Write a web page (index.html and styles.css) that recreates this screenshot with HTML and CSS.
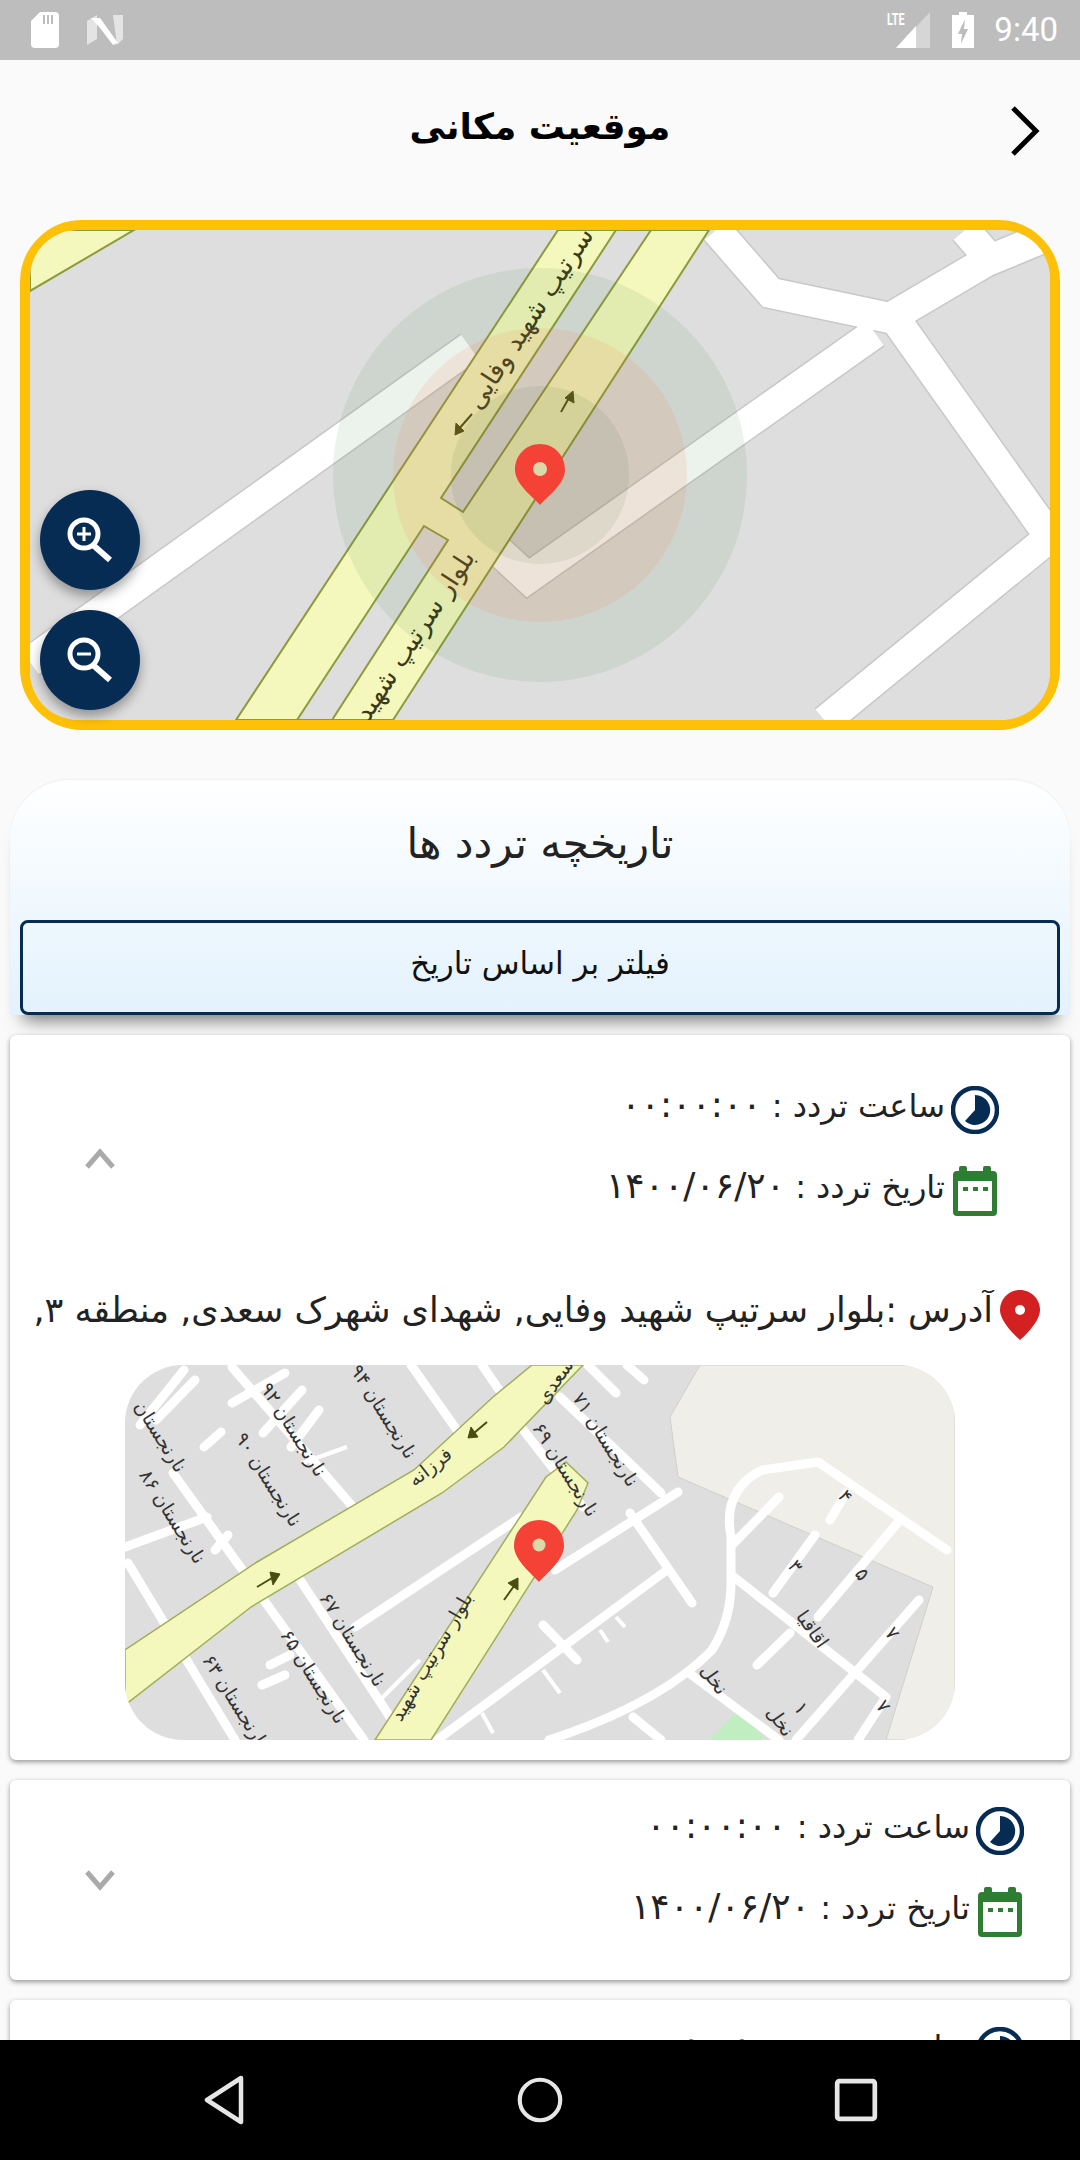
FILE: index.html
```html
<!DOCTYPE html>
<html lang="fa">
<head>
<meta charset="utf-8">
<title>موقعیت مکانی</title>
<link rel="stylesheet" href="styles.css">
</head>
<body>
<div class="screen">
  <header class="status">
    <div class="status-left">
      <svg class="ic-sd" viewBox="0 0 28 36"><path d="M9 0h15a4 4 0 0 1 4 4v28a4 4 0 0 1-4 4H4a4 4 0 0 1-4-4V9z" fill="#fff"/><path d="M12 3h2v9h-2zM16 3h2v9h-2zM20 3h2v9h-2z" fill="#bdbdbd"/></svg>
      <svg class="ic-n" viewBox="0 0 36 30"><path d="M0 6l10-6v24L0 30z" fill="#e4e4e4"/><path d="M26 0h10v24l-6 6z" fill="#e4e4e4"/><path d="M4 3h9l18 25-5 2-13-17v0z" fill="#fff"/></svg>
    </div>
    <div class="status-right">
      <div class="signal">
        <span class="lte">LTE</span>
        <svg class="ic-signal" viewBox="0 0 34 36"><path d="M34 0v36H0z" fill="#d6d6d6"/><path d="M20 14v22H0z" fill="#fff"/></svg>
      </div>
      <svg class="ic-batt" viewBox="0 0 22 36"><path d="M7 0h8v3h7v33H0V3h7z" fill="#fff"/><path d="M13 7l-7 15h4l-1 10 7-15h-4z" fill="#bdbdbd"/></svg>
      <span class="clock">9:40</span>
    </div>
  </header>

  <main class="content">
    <div class="appbar">
      <h1 class="title">موقعیت مکانی</h1>
      <svg class="ic-back" viewBox="0 0 30 50"><path d="M3 2l23 23L3 48" fill="none" stroke="#000" stroke-width="5"/></svg>
    </div>

    <section class="map-frame">
      <svg class="map-main" viewBox="30 230 1020 490">
        <rect x="30" y="230" width="1020" height="490" fill="#dedede"/>
        <g class="casing">
          <path d="M30 662L470 347"/><path d="M875 333L528 578L465 520"/><path d="M716 230L771 293L890 318L985 262L1050 235"/><path d="M965 230L995 265"/><path d="M891 313L1050 537L825 721"/>
        </g>
        <g class="street-wide">
          <path d="M30 662L470 347"/><path d="M875 333L528 578L465 520"/><path d="M716 230L771 293L890 318L985 262L1050 235"/><path d="M965 230L995 265"/><path d="M891 313L1050 537L825 721"/>
        </g>
        <path class="road" d="M30 230H134L30 291Z"/>
        <path class="road" d="M236 720L558 230H709L393 720Z"/>
        <path class="median" d="M616 230L441 498L463 512L651 230Z"/>
        <path class="median" d="M424 526L448 540L332 720H297Z"/>
        <g class="arrow">
          <path d="M472 414L458 430"/><path class="arrow-head" d="M455 435L456 423L464 431Z"/>
          <path d="M561 412L570 396"/><path class="arrow-head" d="M573 391L574 403L565 398Z"/>
        </g>
        <text class="road-label" transform="translate(537 323) rotate(-57)" text-anchor="middle">سرتیپ شهید وفایی</text>
        <text class="road-label" transform="translate(422 640) rotate(-57)" text-anchor="middle">بلوار سرتیپ شهید</text>
        <circle class="ring-outer" cx="540" cy="475" r="207"/>
        <circle class="ring-mid" cx="540" cy="475" r="147"/>
        <circle class="ring-inner" cx="540" cy="475" r="89"/>
        <path class="pin" d="M540 444C526 444 515 455 515 470C515 484 534 498 540 505C546 498 565 484 565 470C565 455 554 444 540 444Z"/>
        <circle class="pin-hole" cx="540" cy="469" r="7"/>
      </svg>
      <button class="zoom-btn zoom-in" type="button">
        <svg viewBox="0 0 100 100"><circle cx="44" cy="44" r="14" fill="none" stroke="#fff" stroke-width="5"/><path d="M53 55l17 15" stroke="#fff" stroke-width="6"/><path d="M37 44h14M44 37v14" stroke="#fff" stroke-width="3"/></svg>
      </button>
      <button class="zoom-btn zoom-out" type="button">
        <svg viewBox="0 0 100 100"><circle cx="44" cy="44" r="14" fill="none" stroke="#fff" stroke-width="5"/><path d="M53 55l17 15" stroke="#fff" stroke-width="6"/><path d="M37 44h14" stroke="#fff" stroke-width="3"/></svg>
      </button>
    </section>

    <section class="history-head">
      <h2 class="history-title">تاریخچه تردد ها</h2>
      <button class="filter" type="button">فیلتر بر اساس تاریخ</button>
    </section>

    <div class="list">
      <article class="card card-open">
        <div class="summary">
          <svg class="ic-chev" viewBox="0 0 32 24"><path d="M3 20L16 5l13 15" fill="none" stroke="#aaa" stroke-width="5"/></svg>
          <div class="rows">
            <div class="row"><span class="row-text">ساعت تردد : <span class="digits">۰۰:۰۰:۰۰</span></span>
              <svg class="ic-clock" viewBox="0 0 48 48"><circle cx="24" cy="24" r="22" fill="none" stroke="#062c54" stroke-width="4.5"/><path d="M24 9A15 15 0 1 1 14 35L24 24Z" fill="#062c54"/></svg></div>
            <div class="row"><span class="row-text">تاریخ تردد : <span class="digits">۱۴۰۰/۰۶/۲۰</span></span>
              <svg class="ic-cal" viewBox="0 0 44 50"><path d="M8 0h4a2 2 0 0 1 2 2v3h16V2a2 2 0 0 1 2-2h4a2 2 0 0 1 2 2v3h2a4 4 0 0 1 4 4v37a4 4 0 0 1-4 4H4a4 4 0 0 1-4-4V9a4 4 0 0 1 4-4h2V2a2 2 0 0 1 2-2z" fill="#2e7d32"/><rect x="5" y="15" width="34" height="30" fill="#fff"/><path d="M10 21h5v4h-5zM20 21h5v4h-5zM30 21h5v4h-5z" fill="#2e7d32"/></svg></div>
          </div>
        </div>
        <div class="address">
          <span class="address-text">آدرس :بلوار سرتیپ شهید وفایی, شهدای شهرک سعدی, منطقه ۳,</span>
          <svg class="ic-pin" viewBox="0 0 40 50"><path d="M20 0C9 0 0 9 0 20C0 33 20 50 20 50S40 33 40 20C40 9 31 0 20 0Z" fill="#d32020"/><circle cx="20" cy="20" r="5" fill="#fff"/></svg>
        </div>
        <svg class="map-mini" viewBox="125 1365 830 375">
          <rect x="125" y="1365" width="830" height="375" fill="#dedede"/>
          <path class="land" d="M700 1365L670 1417L678 1477L933 1587L886 1740H955V1365Z"/>
          <path class="park" d="M740 1708L709 1740H765Z"/>
          <g class="street">
            <path d="M411 1365L459 1433"/><path d="M482 1365L504 1397"/><path d="M588 1365L616 1393"/><path d="M627 1365L644 1380"/>
            <path d="M232 1367L353 1507"/><path d="M173 1473L364 1740"/><path d="M128 1563L235 1740"/><path d="M285 1557L392 1720"/>
            <path d="M560 1397L661 1493"/><path d="M521 1427L583 1507"/><path d="M156 1420L195 1380"/><path d="M184 1370L140 1425"/><path d="M232 1403L285 1373"/>
            <path d="M263 1433L302 1390"/><path d="M291 1447L319 1410"/><path d="M204 1447L221 1432"/><path d="M125 1547L207 1517"/>
            <path d="M355 1627L521 1517"/><path d="M555 1570L678 1492"/><path d="M630 1513L692 1603"/><path d="M437 1740L667 1570"/>
            <path d="M543 1625L577 1660"/><path d="M734 1577L886 1697L858 1740"/><path d="M689 1673L779 1740"/><path d="M734 1543L779 1497"/>
            <path d="M830 1520L846 1493"/><path d="M773 1593L815 1535"/><path d="M818 1617L900 1520"/><path d="M757 1665L790 1633"/>
            <path d="M796 1740L919 1600"/><path d="M633 1717L661 1740"/><path d="M549 1740Q661 1703 712 1650Q731 1620 731 1583V1537Q722 1490 762 1470L818 1462L947 1550"/>
            <path d="M270 1665L290 1655"/><path d="M262 1685L285 1675"/><path d="M215 1550L228 1535"/>
          </g>
          <g class="street-thin">
            <path d="M600 1630L608 1642"/><path d="M616 1617L625 1627"/><path d="M543 1670L560 1693"/><path d="M482 1713L493 1733"/><path d="M302 1463L347 1447"/><path d="M440 1640L470 1610"/><path d="M380 1700L420 1660"/><path d="M420 1690L455 1650"/>
          </g>
          <path class="road road-mini" d="M125 1650L257 1562L414 1470L493 1397L532 1365H583L504 1447L442 1493L251 1607L125 1705Z"/>
          <path class="road road-mini" d="M375 1740L546 1477L566 1462L588 1483L577 1510L431 1740Z"/>
          <g class="arrow">
            <path d="M257 1587L272 1578"/><path class="arrow-head" d="M280 1574L270 1572L273 1585Z"/>
            <path d="M487 1422L474 1433"/><path class="arrow-head" d="M468 1438L471 1427L478 1437Z"/>
            <path d="M504 1600L514 1586"/><path class="arrow-head" d="M518 1578L508 1583L518 1590Z"/>
          </g>
          <g class="map-label">
            <text transform="translate(378 1415) rotate(58)" text-anchor="middle">نارنجستان ۹۴</text>
            <text transform="translate(288 1433) rotate(58)" text-anchor="middle">نارنجستان ۹۲</text>
            <text transform="translate(263 1483) rotate(58)" text-anchor="middle">نارنجستان ۹۰</text>
            <text transform="translate(155 1440) rotate(58)" text-anchor="middle">نارنجستان</text>
            <text transform="translate(167 1520) rotate(58)" text-anchor="middle">نارنجستان ۸۶</text>
            <text transform="translate(347 1643) rotate(58)" text-anchor="middle">نارنجستان ۶۷</text>
            <text transform="translate(308 1680) rotate(58)" text-anchor="middle">نارنجستان ۶۵</text>
            <text transform="translate(230 1705) rotate(58)" text-anchor="middle">نارنجستان ۶۳</text>
            <text transform="translate(560 1473) rotate(58)" text-anchor="middle">نارنجستان ۶۹</text>
            <text transform="translate(600 1443) rotate(58)" text-anchor="middle">نارنجستان ۷۱</text>
            <text transform="translate(434 1472) rotate(-38)" text-anchor="middle">فرزانه</text>
            <text transform="translate(560 1385) rotate(-55)" text-anchor="middle">سعدی</text>
            <text transform="translate(437 1660) rotate(-60)" text-anchor="middle">بلوار سرتیپ شهید</text>
            <text transform="translate(807 1633) rotate(55)" text-anchor="middle">اقاقیا</text>
            <text transform="translate(709 1683) rotate(55)" text-anchor="middle">نخل</text>
            <text transform="translate(775 1725) rotate(55)" text-anchor="middle">نخل</text>
            <text transform="translate(840 1500) rotate(55)" text-anchor="middle">۴</text>
            <text transform="translate(790 1570) rotate(55)" text-anchor="middle">۳</text>
            <text transform="translate(857 1578) rotate(55)" text-anchor="middle">۵</text>
            <text transform="translate(887 1637) rotate(55)" text-anchor="middle">۷</text>
            <text transform="translate(878 1710) rotate(55)" text-anchor="middle">۷</text>
            <text transform="translate(796 1712) rotate(55)" text-anchor="middle">۱</text>
          </g>
          <path class="pin" d="M539 1520C525 1520 514 1531 514 1546C514 1560 533 1575 539 1582C545 1575 564 1560 564 1546C564 1531 553 1520 539 1520Z"/>
          <circle class="pin-hole" cx="539" cy="1545" r="6.5"/>
        </svg>
      </article>

      <article class="card card-closed">
        <div class="summary">
          <svg class="ic-chev" viewBox="0 0 32 24"><path d="M3 4l13 15L29 4" fill="none" stroke="#aaa" stroke-width="5"/></svg>
          <div class="rows">
            <div class="row"><span class="row-text">ساعت تردد : <span class="digits">۰۰:۰۰:۰۰</span></span>
              <svg class="ic-clock" viewBox="0 0 48 48"><circle cx="24" cy="24" r="22" fill="none" stroke="#062c54" stroke-width="4.5"/><path d="M24 9A15 15 0 1 1 14 35L24 24Z" fill="#062c54"/></svg></div>
            <div class="row"><span class="row-text">تاریخ تردد : <span class="digits">۱۴۰۰/۰۶/۲۰</span></span>
              <svg class="ic-cal" viewBox="0 0 44 50"><path d="M8 0h4a2 2 0 0 1 2 2v3h16V2a2 2 0 0 1 2-2h4a2 2 0 0 1 2 2v3h2a4 4 0 0 1 4 4v37a4 4 0 0 1-4 4H4a4 4 0 0 1-4-4V9a4 4 0 0 1 4-4h2V2a2 2 0 0 1 2-2z" fill="#2e7d32"/><rect x="5" y="15" width="34" height="30" fill="#fff"/><path d="M10 21h5v4h-5zM20 21h5v4h-5zM30 21h5v4h-5z" fill="#2e7d32"/></svg></div>
          </div>
        </div>
      </article>

      <article class="card card-closed">
        <div class="summary">
          <svg class="ic-chev" viewBox="0 0 32 24"><path d="M3 4l13 15L29 4" fill="none" stroke="#aaa" stroke-width="5"/></svg>
          <div class="rows">
            <div class="row"><span class="row-text">ساعت تردد : <span class="digits">۰۰:۰۰:۰۰</span></span>
              <svg class="ic-clock" viewBox="0 0 48 48"><circle cx="24" cy="24" r="22" fill="none" stroke="#062c54" stroke-width="4.5"/><path d="M24 9A15 15 0 1 1 14 35L24 24Z" fill="#062c54"/></svg></div>
          </div>
        </div>
      </article>
    </div>
  </main>

  <nav class="navbar">
    <svg class="nav-ic" viewBox="0 0 44 50"><path d="M39 3L5 25l34 22z" fill="none" stroke="#e6e6e6" stroke-width="4.5" stroke-linejoin="round"/></svg>
    <svg class="nav-ic" viewBox="0 0 50 50"><circle cx="25" cy="25" r="22" fill="none" stroke="#e6e6e6" stroke-width="4.5"/></svg>
    <svg class="nav-ic" viewBox="0 0 44 44"><rect x="4" y="4" width="36" height="36" rx="2" fill="none" stroke="#e6e6e6" stroke-width="4.5"/></svg>
  </nav>
</div>
</body>
</html>
```

FILE: styles.css
```css
* { box-sizing: border-box; }
html, body { margin: 0; padding: 0; }
body { font-family: "DejaVu Sans", "Noto Sans", sans-serif; background: #fafafa; }
.screen { width: 1080px; height: 2160px; display: flex; flex-direction: column; overflow: hidden; background: #fafafa; }

.status { flex: 0 0 60px; background: #bdbdbd; display: flex; justify-content: space-between; align-items: center; padding: 0 22px 0 31px; }
.status-left, .status-right { display: flex; align-items: center; }
.status-left { gap: 28px; }
.ic-sd { width: 28px; height: 36px; }
.ic-n { width: 36px; height: 30px; }
.signal { position: relative; width: 43px; height: 36px; margin-right: 22px; }
.lte { position: absolute; left: 0; top: 0; font: 700 16px/16px "Roboto", sans-serif; color: #fff; transform: scaleX(.68); transform-origin: left top; }
.ic-signal { position: absolute; right: 0; top: 0; width: 34px; height: 36px; }
.ic-batt { width: 22px; height: 36px; margin-right: 20px; }
.clock { font: 400 33px/40px "Roboto", sans-serif; color: #fff; }

.content { flex: 1 1 0; min-height: 0; overflow: hidden; }
.appbar { height: 160px; position: relative; display: flex; justify-content: center; padding-top: 40px; }
.title { margin: 0; font-size: 36px; line-height: 54px; font-weight: 700; color: #000; direction: rtl; }
.ic-back { position: absolute; right: 40px; top: 46px; width: 30px; height: 50px; }

.map-frame { position: relative; margin: 0 20px; height: 510px; border: 10px solid #ffc107; border-radius: 62px; background: #fff; }
.map-main { display: block; width: 1020px; height: 490px; border-radius: 48px; }
.zoom-btn { position: absolute; left: 10px; width: 100px; height: 100px; padding: 0; border: 0; border-radius: 50%; background: #062c54; box-shadow: 0 6px 12px rgba(0,0,0,.35); }
.zoom-btn svg { display: block; width: 100px; height: 100px; }
.zoom-in { top: 260px; }
.zoom-out { top: 380px; }

.road { fill: #f5f8bd; stroke: #8f9a3a; stroke-width: 2; }
.road-mini { stroke: #a3ad5a; stroke-width: 1.5; }
.median { fill: #dedede; stroke: #8f9a3a; stroke-width: 2; }
.casing path { fill: none; stroke: #c8c8c8; stroke-width: 33; }
.street-wide path { fill: none; stroke: #fff; stroke-width: 30; }
.street path { fill: none; stroke: #fff; stroke-width: 9; stroke-linecap: round; stroke-linejoin: round; }
.street-thin path { fill: none; stroke: #fff; stroke-width: 4; }
.land { fill: #f0eee8; stroke: #cfcfcb; stroke-width: 1; }
.park { fill: #c0eec0; }
.arrow path { fill: none; stroke: #4a4d10; stroke-width: 2; }
.arrow .arrow-head { fill: #4a4d10; stroke-width: 1; }
.road-label { font-size: 26px; fill: #3a3a1a; direction: rtl; }
.map-label text { font-size: 19px; fill: #333; direction: rtl; }
.ring-outer { fill: #2e7d32; fill-opacity: .09; }
.ring-mid { fill: #ff7043; fill-opacity: .12; }
.ring-inner { fill: #1b5e20; fill-opacity: .08; }
.pin { fill: #f44336; }
.pin-hole { fill: #dcd9a8; }

.history-head { margin: 50px 10px 0; height: 235px; padding: 0 10px; border-radius: 60px 60px 0 0; background: linear-gradient(#fff, #e3f2fd); box-shadow: 0 18px 18px -13px rgba(0,0,0,.55), 0 -1px 2px rgba(0,0,0,.05); display: flex; flex-direction: column; }
.history-title { flex: 1 1 0; margin: 0 0 14px; display: flex; align-items: center; justify-content: center; font-size: 42px; font-weight: 400; color: #222; direction: rtl; }
.filter { height: 95px; padding: 0 0 10px; background: transparent; border: 3px solid #062c54; border-radius: 8px; font: 400 31px "DejaVu Sans", sans-serif; color: #111; direction: rtl; }

.list { display: flex; flex-direction: column; gap: 20px; margin: 20px 10px 0; }
.card { background: #fff; border-radius: 6px; box-shadow: 0 2px 5px rgba(0,0,0,.4); flex: none; }
.card-open { height: 725px; padding-top: 50px; }
.card-closed { height: 200px; padding-top: 26px; }
.summary { display: flex; justify-content: space-between; align-items: center; padding-left: 74px; }
.card-open .summary { padding-right: 71px; }
.card-closed .summary { padding-right: 46px; }
.ic-chev { width: 32px; height: 24px; margin-top: 18px; }
.rows { display: flex; flex-direction: column; gap: 32px; }
.row { display: flex; align-items: center; justify-content: flex-end; gap: 6px; height: 49px; }
.row-text { font-size: 32px; line-height: 40px; color: #222; direction: rtl; white-space: nowrap; padding-bottom: 8px; }
.digits { font-size: 36px; letter-spacing: 5.5px; }
.ic-clock { width: 48px; height: 48px; flex: none; }
.ic-cal { width: 44px; height: 50px; flex: none; margin: 0 2px; }

.address { display: flex; align-items: center; justify-content: flex-end; gap: 7px; margin-top: 75px; padding-right: 30px; height: 50px; overflow: hidden; }
.address-text { font-size: 35px; line-height: 40px; color: #222; direction: rtl; white-space: nowrap; padding-bottom: 10px; }
.ic-pin { width: 40px; height: 50px; flex: none; }
.map-mini { display: block; width: 830px; height: 375px; margin: 25px auto 0; border-radius: 58px; }

.navbar { flex: 0 0 120px; background: #000; display: flex; justify-content: center; align-items: center; gap: 270px; }
.nav-ic { width: 46px; height: 50px; }
```
